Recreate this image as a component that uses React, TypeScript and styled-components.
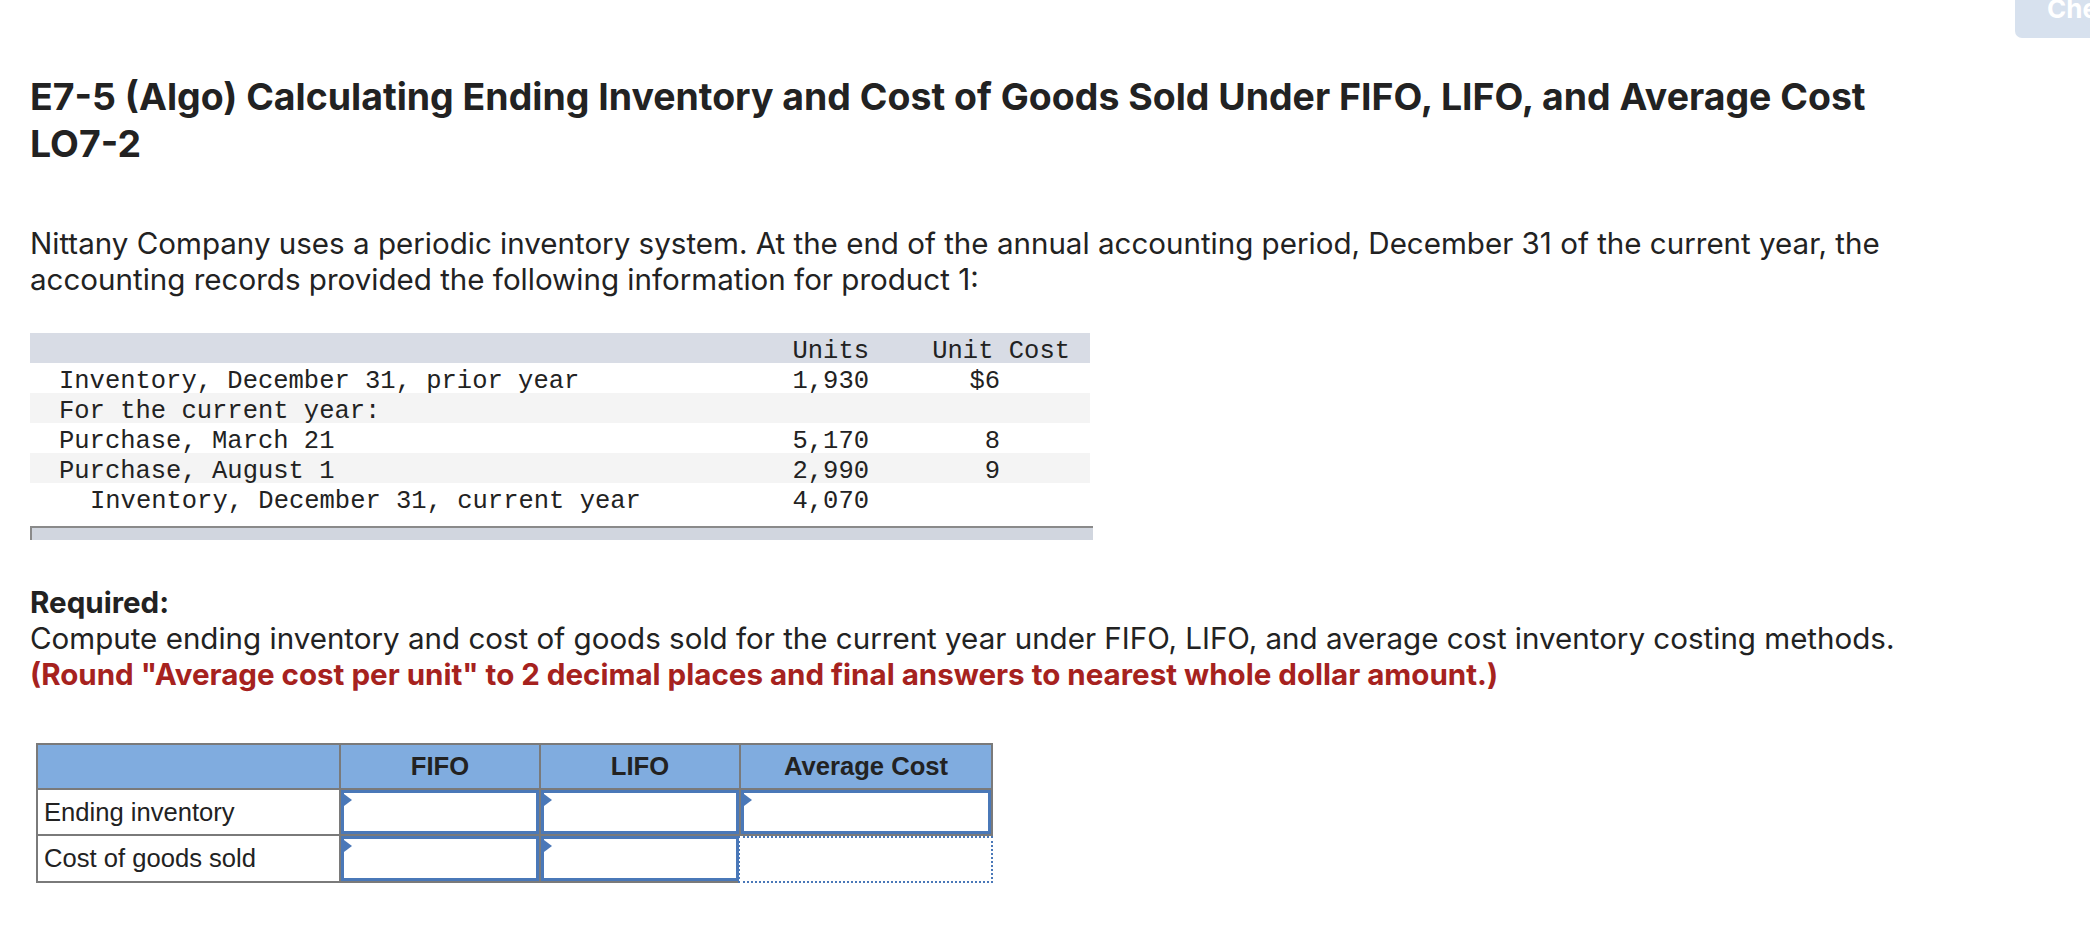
import React from "react";
import styled, { createGlobalStyle } from "styled-components";

const Global = createGlobalStyle`
  html, body { margin: 0; padding: 0; background: #ffffff; }
  body { overflow: hidden; }
  * { box-sizing: border-box; }
`;

const SANS = `"Inter", "Open Sans", sans-serif`;
const MONO = `"Courier New", "Nimbus Mono PS", "FreeMono", "Liberation Mono", monospace`;
const ARIAL = `"Liberation Sans", Arial, sans-serif`;

const Page = styled.div`
  width: 2090px;
  min-height: 938px;
  padding: 0 0 0 30px;
  color: #222222;
  font-family: ${SANS};
`;

const TopBar = styled.div`
  display: flex;
  justify-content: flex-end;
  height: 38px;
`;

const CheckButton = styled.button`
  flex: none;
  width: 240px;
  height: 60px;
  margin-top: -22px;
  margin-right: -165px;
  padding: 0 0 0 32px;
  border: none;
  border-radius: 0 0 0 7px;
  background: #d7e1ee;
  color: #ffffff;
  font-family: ${SANS};
  font-weight: 700;
  font-size: 26px;
  white-space: nowrap;
  display: flex;
  align-items: center;
  overflow: hidden;
`;

const Title = styled.h1`
  margin: 35px 0 0 0;
  font-size: 37.45px;
  line-height: 47px;
  font-weight: 700;
  color: #222222;
  width: 1900px;
`;

const Paragraph = styled.p`
  margin: 58px 0 0 0;
  font-size: 29.55px;
  line-height: 36px;
  font-weight: 400;
  width: 1900px;
`;

/* ---------- data table ---------- */

const DataTable = styled.div`
  margin-top: 36px;
  width: 1060px;
  font-family: ${MONO};
  font-size: 25.5px;
  color: #222222;
`;

const DataRow = styled.div<{ $bg: string }>`
  display: grid;
  grid-template-columns: 1fr 120px 200px;
  height: 30px;
  background: ${(p) => p.$bg};
`;

const DataCell = styled.div<{ $align?: "left" | "right"; $pad?: number; $indent?: number }>`
  padding-top: 7px;
  line-height: 23px;
  white-space: pre;
  text-align: ${(p) => p.$align ?? "left"};
  padding-left: ${(p) => (p.$align === "right" ? 0 : (p.$pad ?? 29) + (p.$indent ?? 0))}px;
  padding-right: ${(p) => (p.$align === "right" ? p.$pad ?? 21 : 0)}px;
`;

const DataFooter = styled.div`
  margin-top: 13px;
  width: 1063px;
  height: 14px;
  background: #d1d6df;
  border-top: 2px solid #8a8a8a;
  border-left: 2px solid #8a8a8a;
`;

/* ---------- required ---------- */

const Required = styled.div`
  margin-top: 44px;
  font-size: 29.55px;
  line-height: 36px;
`;

const RequiredLabel = styled.div`
  font-weight: 700;
`;

const Instruction = styled.div`
  font-weight: 400;
`;

const Note = styled.div`
  font-weight: 700;
  color: #a6221e;
`;

/* ---------- answer table ---------- */

const AnswerGrid = styled.div`
  margin: 51px 0 0 6px;
  display: grid;
  grid-template-columns: 303px 200px 200px 252px;
  grid-template-rows: 45px 46px 47px;
  width: fit-content;
  border-top: 2px solid #7a7a7a;
  border-left: 2px solid #7a7a7a;
  font-family: ${ARIAL};
  font-size: 25.6px;
  color: #222222;
`;

const HeadCell = styled.div`
  background: #80acdf;
  border-right: 2px solid #7a7a7a;
  border-bottom: 2px solid #7a7a7a;
  display: flex;
  align-items: center;
  justify-content: center;
  font-weight: 700;
`;

const LabelCell = styled.div`
  background: #ffffff;
  border-right: 2px solid #7a7a7a;
  border-bottom: 2px solid #7a7a7a;
  display: flex;
  align-items: center;
  padding-left: 6px;
`;

const InputCell = styled.div`
  border-right: 2px solid #7a7a7a;
  border-bottom: 2px solid #7a7a7a;
  background: #ffffff;
`;

const InputBox = styled.div`
  position: relative;
  height: 100%;
  border: 3px solid #4a78b8;
  background: #ffffff;
  &::before {
    content: "";
    position: absolute;
    left: 0;
    top: 1px;
    border-top: 6px solid transparent;
    border-bottom: 6px solid transparent;
    border-left: 8px solid #4a78b8;
  }
`;

const DottedCell = styled.div`
  margin-left: -3px;
  border: 2px dotted #4a78b8;
  background: #ffffff;
`;

const rows = [
  { label: "Inventory, December 31, prior year", units: "1,930", cost: "$6", bg: "#ffffff", indent: 0 },
  { label: "For the current year:", units: "", cost: "", bg: "#f4f4f4", indent: 0 },
  { label: "Purchase, March 21", units: "5,170", cost: "8", bg: "#ffffff", indent: 0 },
  { label: "Purchase, August 1", units: "2,990", cost: "9", bg: "#f4f4f4", indent: 0 },
  { label: "Inventory, December 31, current year", units: "4,070", cost: "", bg: "#ffffff", indent: 31 },
];

export default function App() {
  return (
    <>
      <Global />
      <Page>
        <TopBar>
          <CheckButton type="button">Check my work</CheckButton>
        </TopBar>

        <Title>
          E7-5 (Algo) Calculating Ending Inventory and Cost of Goods Sold Under FIFO, LIFO, and Average Cost
          <br />
          LO7-2
        </Title>

        <Paragraph>
          Nittany Company uses a periodic inventory system. At the end of the annual accounting period, December 31 of the current year, the
          <br />
          accounting records provided the following information for product 1:
        </Paragraph>

        <DataTable>
          <DataRow $bg="#d8dce5">
            <DataCell />
            <DataCell $align="right">Units</DataCell>
            <DataCell $align="right" $pad={20}>Unit Cost</DataCell>
          </DataRow>
          {rows.map((r) => (
            <DataRow key={r.label} $bg={r.bg}>
              <DataCell $indent={r.indent}>{r.label}</DataCell>
              <DataCell $align="right">{r.units}</DataCell>
              <DataCell $align="right" $pad={90}>{r.cost}</DataCell>
            </DataRow>
          ))}
          <DataFooter />
        </DataTable>

        <Required>
          <RequiredLabel>Required:</RequiredLabel>
          <Instruction>
            Compute ending inventory and cost of goods sold for the current year under FIFO, LIFO, and average cost inventory costing methods.
          </Instruction>
          <Note>
            (Round "Average cost per unit" to 2 decimal places and final answers to nearest whole dollar amount.)
          </Note>
        </Required>

        <AnswerGrid>
          <HeadCell />
          <HeadCell>FIFO</HeadCell>
          <HeadCell>LIFO</HeadCell>
          <HeadCell>Average Cost</HeadCell>

          <LabelCell>Ending inventory</LabelCell>
          <InputCell><InputBox /></InputCell>
          <InputCell><InputBox /></InputCell>
          <InputCell><InputBox /></InputCell>

          <LabelCell>Cost of goods sold</LabelCell>
          <InputCell><InputBox /></InputCell>
          <InputCell><InputBox /></InputCell>
          <DottedCell />
        </AnswerGrid>
      </Page>
    </>
  );
}
